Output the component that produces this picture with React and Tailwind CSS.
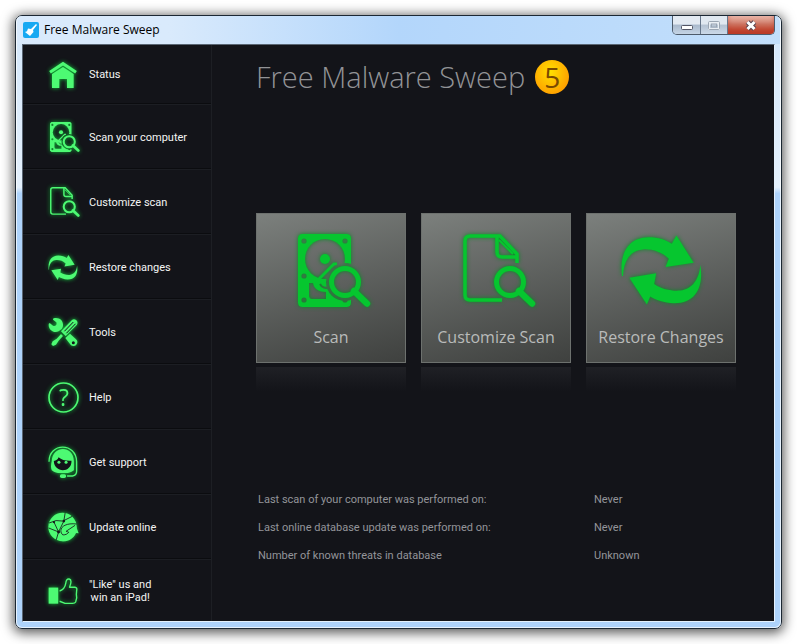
import { useId } from "react";

function DriveIcon({ className }) {
  const id = useId();
  return (
    <svg viewBox="-7 0 80 73" className={className} fill="currentColor" aria-hidden="true">
      <mask id={id}>
        <rect width="53" height="73" rx="4" fill="white" />
        <circle cx="27" cy="25" r="20" fill="black" />
        <circle cx="6" cy="7" r="2.6" fill="black" />
        <circle cx="47" cy="7" r="2.6" fill="black" />
        <circle cx="6" cy="42" r="2.6" fill="black" />
        <circle cx="6" cy="66" r="2.6" fill="black" />
        <circle cx="47" cy="66" r="2.6" fill="black" />
        <path d="M11 49h4c1 6 6 9 13 9v7H14q-3 0-3-4z" fill="black" />
        <circle cx="27" cy="25" r="5" fill="white" />
        <path d="M39 30h-3L18 48" fill="none" stroke="white" strokeWidth="3" />
        <path d="M22 50c2 4 5 4 10 4" fill="none" stroke="black" strokeWidth="2" />
        <circle cx="47" cy="48" r="19" fill="black" />
        <path d="M47 48 73 73" stroke="black" strokeWidth="10" />
      </mask>
      <rect width="53" height="73" rx="4" mask={`url(#${id})`} />
      <circle cx="47" cy="48" r="13.5" fill="none" stroke="currentColor" strokeWidth="5" />
      <path d="M56 57 69 69.500" stroke="currentColor" strokeWidth="6.500" strokeLinecap="round" />
    </svg>
  );
}

function DocumentIcon({ className }) {
  return (
    <svg viewBox="-7 0 80 73" className={className} fill="none" stroke="currentColor" strokeWidth="3.500" aria-hidden="true">
      <path d="M39 66H7q-5 0-5-5V7q0-5 5-5H37L54 20V29" />
      <path d="M34 2V18q0 5 5 5H54" />
      <path d="M36 6 50 20" strokeWidth="2" />
      <circle cx="47" cy="48" r="13.5" strokeWidth="5" />
      <path d="M56 57 69 69.500" strokeWidth="6.500" strokeLinecap="round" />
    </svg>
  );
}

function RestoreIcon({ className }) {
  return (
    <svg viewBox="122 90 244 208" className={className} fill="currentColor" aria-hidden="true">
      <path d="M125 212C117 150 140 95 205 95c30 0 53 8 70 20l14-25 52 82-85 13 10-25c-21-20-51-30-78-28-38 3-58 33-60 80z" />
      <path d="M361 178c10 62-10 117-80 116-30-1-55-10-71-20l-10 24-53-81 81-13-6 32c23 16 53 22 78 20 40-5 58-38 61-78z" />
    </svg>
  );
}

function HomeIcon({ className }) {
  return (
    <svg viewBox="144 174 88 84" className={className} fill="currentColor" aria-hidden="true">
      <path d="m149 208 39-26 39 26" fill="none" stroke="currentColor" strokeWidth="9" />
      <path d="m155 213 33-21 32 21v42h-20v-27h-23v27h-22z" />
    </svg>
  );
}

function ToolsIcon({ className }) {
  return (
    <svg viewBox="78 76 90 88" className={className} fill="currentColor" aria-hidden="true">
      <path d="M95 79c14-5 29 5 28 20 0 5-1 8-4 12l-9 7c-14 7-30-4-30-19 0-4 1-6 4-5l9 7c7 4 13-3 10-10l-9-7c-2-2-1-4 1-5z" />
      <path d="m130 138 14-13 18 17a12 12 0 0 1 2 15 12 12 0 0 1-17 3z" />
      <circle cx="154" cy="152" r="4.500" fill="#131419" />
      <path d="m117 118 33-34c7-6 21 2 15 14l-34 34z" />
      <path d="m128 117 25-26m-19 32 26-27" stroke="#131419" strokeWidth="3" strokeLinecap="round" />
      <path d="m117 126 6 6-13 14-8 12-9 4-5-5 4-9 12-8z" />
    </svg>
  );
}

function HelpIcon({ className }) {
  return (
    <svg viewBox="80 275 92 92" className={className} fill="none" aria-hidden="true">
      <circle cx="126" cy="321" r="43" stroke="currentColor" strokeWidth="5" />
      <text x="127" y="346" textAnchor="middle" fontSize="68" fill="currentColor" className="font-['Open_Sans',sans-serif]">
        ?
      </text>
    </svg>
  );
}

function SupportIcon({ className }) {
  return (
    <svg viewBox="86 460 88 94" className={className} fill="currentColor" aria-hidden="true">
      <path d="M89 506c0-57 80-57 81 0v28q0 12-12 14h-16" fill="none" stroke="currentColor" strokeWidth="4" />
      <path d="M97 504c2-47 64-47 65 0v27c-14 10-20 8-32 8s-20 2-33-8c-4-8-2-17 0-27z" />
      <path d="M103 504c7-1 12-5 14-11 9 8 22 11 38 10 1 37-51 37-52 1z" fill="#131419" />
      <circle cx="118" cy="508" r="4.500" />
      <circle cx="139" cy="508" r="4.500" />
      <rect x="121" y="543" width="18" height="11" rx="5" />
    </svg>
  );
}

function UpdateIcon({ className }) {
  return (
    <svg viewBox="86 95 94 88" className={className} fill="currentColor" aria-hidden="true">
      <circle cx="130" cy="139" r="43" />
      <g fill="none" stroke="#131419" strokeWidth="2.500">
        <path d="M89 127q22-12 42-6l28-14M134 121l-16 33-30-12M104 124l14 30-7 24M134 121l4-25" />
        <path d="M173 130c-30-4-48 7-48 20 0 6 2 9 6 13 9 0 14-3 18-8l-8-3 27-18" />
      </g>
      <g fill="#131419">
        <circle cx="104" cy="124" r="3.500" />
        <circle cx="134" cy="121" r="4" />
        <circle cx="118" cy="154" r="4.500" />
      </g>
      <path d="m148 154 23-17 8 21-8-1c-8 18-24 26-41 25l-2-13c15 1 24-4 29-14z" />
    </svg>
  );
}

function LikeIcon({ className }) {
  return (
    <svg viewBox="88 295 86 76" className={className} fill="none" stroke="currentColor" strokeWidth="4" strokeLinejoin="round" aria-hidden="true">
      <rect x="89" y="323" width="28" height="47" fill="currentColor" stroke="none" />
      <path d="M121 333c11-3 16-10 18-22 1-9 4-14 10-13 8 2 6 12 1 24h16q7 1 5 9l-1 12 1 10-3 12q-2 4-9 4h-22l-16-6" />
    </svg>
  );
}

const NAV = [
  { label: "Status", Icon: HomeIcon, size: "h-7 w-[30px]", row: "h-[60px]" },
  { label: "Scan your computer", Icon: DriveIcon, size: "h-[30px] w-[33px]", row: "h-[65px]" },
  { label: "Customize scan", Icon: DocumentIcon, size: "h-[30px] w-[33px]", row: "h-[65px]" },
  { label: "Restore changes", Icon: RestoreIcon, size: "h-[25px] w-[30px]", row: "h-[65px]" },
  { label: "Tools", Icon: ToolsIcon, size: "size-[30px]", row: "h-[65px]" },
  { label: "Help", Icon: HelpIcon, size: "size-[31px]", row: "h-[65px]" },
  { label: "Get support", Icon: SupportIcon, size: "h-8 w-[30px]", row: "h-[65px]" },
  { label: "Update online", Icon: UpdateIcon, size: "h-[30px] w-[31px]", row: "h-[65px]" },
  { label: "\"Like\" us and\nwin an iPad!", Icon: LikeIcon, size: "h-[26px] w-[30px]", row: "h-[61px] text-center" },
];

const CARDS = [
  { label: "Scan", Icon: DriveIcon, size: "h-[73px] w-20" },
  { label: "Customize Scan", Icon: DocumentIcon, size: "h-[73px] w-20" },
  { label: "Restore Changes", Icon: RestoreIcon, size: "h-[70px] w-[81px]" },
];

const FACTS = [
  ["Last scan of your computer was performed on:", "Never"],
  ["Last online database update was performed on:", "Never"],
  ["Number of known threats in database", "Unknown"],
];

function TitleBar() {
  return (
    <header className="flex h-7 items-start justify-between">
      <div className="flex h-7 items-center gap-[5px] pl-px">
        <svg viewBox="0 0 16 16" className="size-4" aria-hidden="true">
          <rect width="16" height="16" rx="2" fill="#18a9f2" />
          <path d="m13 2 1 1-4 5 .5 2L7 14 2 10l2-.8L5 6.500l3 .5z" fill="white" />
        </svg>
        <span className="text-[12px] text-black">Free Malware Sweep</span>
      </div>
      <div className="flex h-[19px] overflow-hidden rounded-b-[5px] border border-t-0 border-[#4d5b6b]">
        <button type="button" aria-label="Minimize" className="flex w-7 items-center justify-center border-r border-[#66768a] bg-linear-to-b from-[#e3eaf2] from-45% via-[#a9b9cc] via-50% to-[#c5d5e6] pt-1">
          <svg viewBox="0 0 12 5" className="h-[5px] w-3" aria-hidden="true">
            <rect x=".5" y=".5" width="11" height="4" rx="1" fill="white" stroke="#535666" />
          </svg>
        </button>
        <button type="button" aria-label="Maximize" className="flex w-[27px] items-center justify-center border-r border-[#66768a] bg-linear-to-b from-[#e0e8f0] from-45% via-[#b4c2d2] via-50% to-[#cbd9e8]">
          <svg viewBox="0 0 12 9" className="h-[9px] w-3" fill="none" aria-hidden="true">
            <rect x="1" y="1" width="10" height="7" stroke="#e9eef3" strokeWidth="2" />
            <rect x=".5" y=".5" width="11" height="8" rx="1" stroke="#9ba6b3" />
            <rect x="3.500" y="3" width="5" height="3" stroke="#9ba6b3" />
          </svg>
        </button>
        <button type="button" aria-label="Close" className="flex w-[46px] items-center justify-center bg-linear-to-b from-[#e9b3a6] from-0% via-[#d0806e] via-45% to-[#dc7b60] shadow-[inset_0_-9px_6px_-2px_#bb3a26]">
          <svg viewBox="0 0 12 11" className="h-[11px] w-3" fill="none" aria-hidden="true">
            <path d="m2.500 2 7 7m0-7-7 7" stroke="#5b4550" strokeWidth="5" />
            <path d="m2.500 2 7 7m0-7-7 7" stroke="white" strokeWidth="3" />
          </svg>
        </button>
      </div>
    </header>
  );
}

function Sidebar() {
  return (
    <nav className="w-[189px] shrink-0 border-r border-[#1d1f24]">
      {NAV.map(({ label, Icon, size, row }) => (
        <button key={label} type="button" className={`flex w-full items-center border-b border-[#1c1e23] pl-6 font-[Roboto,sans-serif] text-[11px] leading-[13px] text-[#f4f4f4] shadow-[inset_0_-1px_0_#0b0c0f] last:border-b-0 last:shadow-none ${row}`}>
          <span className="flex w-8 shrink-0 justify-center text-[#4dfa73] drop-shadow-[0_0_2px_#12c43c]">
            <Icon className={`shrink-0 ${size}`} />
          </span>
          <span className="pl-[10px] whitespace-pre">{label}</span>
        </button>
      ))}
    </nav>
  );
}

function ScanCard({ label, Icon, size }) {
  return (
    <div>
      <button type="button" className="flex aspect-square w-full flex-col items-center border border-[#6d716e] bg-linear-165 from-[#7c807d] to-[#3f413f] pt-[19px]">
        <span className="flex h-[74px] items-center text-[#06c62f] drop-shadow-[0_0_2px_#088a25]">
          <Icon className={size} />
        </span>
        <span className="pt-[18px] text-[16px] leading-6 whitespace-nowrap text-[#b9bbba]">{label}</span>
      </button>
      <div className="mt-1 h-6 bg-linear-to-b from-[#1f2025] to-[#131419]" />
    </div>
  );
}

export default function App() {
  return (
    <div className="flex min-h-screen bg-white p-[15px] font-['Open_Sans',sans-serif]">
      <div className="flex flex-1 flex-col rounded-[7px] border border-[#1b2733] bg-linear-to-b from-[#d3e7fb] from-0% via-[#e4f0fc] via-28% to-[#aed3fb] to-29% shadow-[0_2px_12px_2px_rgba(0,0,0,0.65)]">
        <div className="flex flex-1 flex-col rounded-[6px] border border-t-0 border-white/70 bg-linear-to-r from-[#d9eafc] from-20% via-[#b3d6fb] via-50% to-[#c3dffb] bg-[length:100%_28px] bg-no-repeat px-[5px] pb-[5px]">
          <TitleBar />
          <div className="flex flex-1 border border-t-[#5a6673] border-r-[#e4f1fd] border-b-[#e4f1fd] border-l-[#5a6673] bg-[#131419]">
            <Sidebar />
            <main className="flex-1 pt-3 pr-[38px] pl-11">
              <h1 className="flex items-center gap-[10px] text-[29px] leading-10 font-light whitespace-nowrap text-[#929396]">
                Free Malware Sweep
                <span className="flex size-[34px] items-center justify-center rounded-full bg-radial-[at_45%_35%] from-[#ffe000] to-[#ff8a00] text-[28px] leading-none font-normal text-[#7a4a00]">
                  5
                </span>
              </h1>
              <div className="grid grid-cols-3 gap-[15px] pt-[116px]">
                {CARDS.map((card) => (
                  <ScanCard key={card.label} {...card} />
                ))}
              </div>
              <table className="mt-[95px] ml-0.5 text-left font-[Roboto,sans-serif] text-[11px] leading-4 text-[#93959a]">
                <tbody>
                  {FACTS.map(([label, value]) => (
                    <tr key={label} className="h-7">
                      <th scope="row" className="w-[336px] font-normal">{label}</th>
                      <td>{value}</td>
                    </tr>
                  ))}
                </tbody>
              </table>
            </main>
          </div>
        </div>
      </div>
    </div>
  );
}
